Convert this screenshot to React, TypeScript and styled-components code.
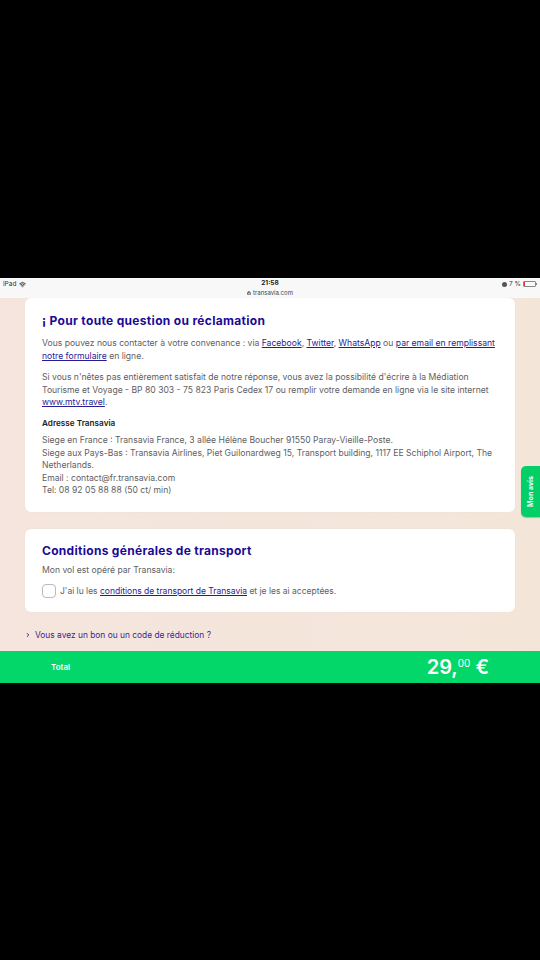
import styled, { createGlobalStyle } from 'styled-components';
import { Wifi, ChevronRight, Lock } from 'lucide-react';

const GlobalStyle = createGlobalStyle`
  html, body {
    margin: 0;
    padding: 0;
    background: #000;
    font-family: "Inter", "Noto Sans", sans-serif;
  }
`;

const Screen = styled.div`
  width: 540px;
  height: 960px;
  background: #000;
  display: flex;
  flex-direction: column;
  overflow: hidden;
  padding-top: 278px;
  box-sizing: border-box;
`;

const StatusBar = styled.header`
  height: 20px;
  flex: none;
  background: #f8f8f9;
  display: grid;
  grid-template-columns: 1fr auto 1fr;
  padding: 0 3px;
  color: #333;
  font-size: 6.5px;
`;

const StatusLeft = styled.div`
  display: flex;
  align-items: center;
  gap: 3px;
  height: 10px;
  margin-top: 1px;
`;

const StatusCenter = styled.div`
  display: flex;
  flex-direction: column;
  align-items: center;
  line-height: 9px;
  padding-top: 1px;
`;

const Clock = styled.span`
  font-weight: 700;
  font-size: 6.5px;
  color: #222;
`;

const Url = styled.span`
  display: flex;
  align-items: center;
  gap: 2px;
  color: #444;
  font-size: 6px;
`;

const StatusRight = styled.div`
  display: flex;
  align-items: center;
  justify-content: flex-end;
  gap: 2px;
  height: 10px;
  margin-top: 1px;
  margin-right: 1px;
`;

const RotationDot = styled.span`
  width: 5px;
  height: 5px;
  border-radius: 50%;
  background: #555;
`;

const Battery = styled.span`
  width: 11px;
  height: 4px;
  border: 1px solid #888;
  border-radius: 1px;
  position: relative;
  &::before {
    content: '';
    position: absolute;
    left: 0;
    top: 0;
    bottom: 0;
    width: 1px;
    background: #d9363e;
  }
  &::after {
    content: '';
    position: absolute;
    right: -2px;
    top: 1px;
    width: 1px;
    height: 2px;
    background: #888;
  }
`;

const Page = styled.main`
  position: relative;
  height: 353px;
  flex: none;
  background: linear-gradient(90deg, #f5e5de 0%, #f3e6d9 100%);
  padding: 0 25px;
  box-sizing: border-box;
`;

const Card = styled.section<{ $pad: string }>`
  background: #fff;
  border-radius: 6px;
  padding: ${(p) => p.$pad};
  margin-bottom: 17px;
  box-shadow: 0 0 2px rgba(120, 100, 90, 0.06);
`;

const Title = styled.h2<{ $spacing: number }>`
  margin: 0;
  color: #1a0a96;
  font-size: 12px;
  line-height: 16px;
  font-weight: 700;
  letter-spacing: ${(p) => p.$spacing}px;
`;

const Body = styled.p`
  margin: 0;
  color: #606062;
  font-size: 8.6px;
  line-height: 12.6px;
`;

const Paragraph = styled(Body)<{ $top: number }>`
  margin-top: ${(p) => p.$top}px;
`;

const Link = styled.a`
  color: #2a1a96;
  text-decoration: underline;
`;

const Subheading = styled.h3`
  margin: 8px 0 4px;
  color: #222;
  font-size: 8.2px;
  line-height: 13px;
  font-weight: 600;
`;

const CheckRow = styled.label`
  display: flex;
  align-items: center;
  gap: 4px;
  margin-top: 7px;
  color: #606062;
  font-size: 8.5px;
`;

const CheckBox = styled.span`
  width: 12px;
  height: 12px;
  flex: none;
  border: 1px solid #b9b9c2;
  border-radius: 4px;
  background: #fff;
`;

const Voucher = styled.div`
  display: flex;
  align-items: center;
  gap: 4px;
  margin-top: 2px;
  color: #3a1f96;
  font-size: 8.4px;
  line-height: 12px;
`;

const ReviewTab = styled.div`
  position: absolute;
  right: 0;
  top: 168px;
  width: 19px;
  height: 51px;
  background: #03cf66;
  border-radius: 5px 0 0 5px;
  box-shadow: 0 1px 1px rgba(0, 90, 40, 0.3);
  display: flex;
  align-items: center;
  justify-content: center;
`;

const ReviewLabel = styled.span`
  transform: rotate(-90deg);
  white-space: nowrap;
  color: #fff;
  font-size: 7px;
  font-weight: 700;
`;

const TotalBar = styled.footer`
  height: 32px;
  flex: none;
  background: #03d76a;
  color: #fff;
  display: flex;
  align-items: center;
  justify-content: space-between;
  padding: 0 51px;
`;

const TotalLabel = styled.span`
  font-size: 8px;
  font-weight: 600;
`;

const Price = styled.span`
  font-size: 20px;
  font-weight: 600;
  line-height: 1;
`;

const Cents = styled.sup`
  font-size: 10px;
  font-weight: 400;
  vertical-align: 7px;
  line-height: 0;
`;

export default function App() {
  return (
    <Screen>
      <GlobalStyle />
      <StatusBar>
        <StatusLeft>
          iPad
          <Wifi size={7} strokeWidth={3} />
        </StatusLeft>
        <StatusCenter>
          <Clock>21:58</Clock>
          <Url>
            <Lock size={4} strokeWidth={4} />
            transavia.com
          </Url>
        </StatusCenter>
        <StatusRight>
          <RotationDot />
          7 %
          <Battery />
        </StatusRight>
      </StatusBar>
      <Page>
        <Card $pad="15px 17px 15px">
          <Title $spacing={0.32}>¡ Pour toute question ou réclamation</Title>
          <Paragraph $top={8}>
            Vous pouvez nous contacter à votre convenance : via <Link>Facebook</Link>, <Link>Twitter</Link>,{' '}
            <Link>WhatsApp</Link> ou <Link>par email en remplissant notre formulaire</Link> en ligne.
          </Paragraph>
          <Paragraph $top={9}>
            Si vous n'nêtes pas entièrement satisfait de notre réponse, vous avez la possibilité d'écrire à la Médiation
            <br />
            Tourisme et Voyage - BP 80 303 - 75 823 Paris Cedex 17 ou remplir votre demande en ligne via le site internet{' '}
            <Link>www.mtv.travel</Link>.
          </Paragraph>
          <Subheading>Adresse Transavia</Subheading>
          <Body>
            Siege en France : Transavia France, 3 allée Hélène Boucher 91550 Paray-Vieille-Poste.
            <br />
            Siege aux Pays-Bas : Transavia Airlines, Piet Guilonardweg 15, Transport building, 1117 EE Schiphol Airport, The
            Netherlands.
            <br />
            Email : contact@fr.transavia.com
            <br />
            Tel: 08 92 05 88 88 (50 ct/ min)
          </Body>
        </Card>
        <Card $pad="14px 17px 14px">
          <Title $spacing={0.3}>Conditions générales de transport</Title>
          <Paragraph $top={5}>Mon vol est opéré par Transavia:</Paragraph>
          <CheckRow>
            <CheckBox />
            <span>
              J'ai lu les <Link>conditions de transport de Transavia</Link> et je les ai acceptées.
            </span>
          </CheckRow>
        </Card>
        <Voucher>
          <ChevronRight size={6} strokeWidth={4} />
          Vous avez un bon ou un code de réduction ?
        </Voucher>
        <ReviewTab>
          <ReviewLabel>Mon avis</ReviewLabel>
        </ReviewTab>
      </Page>
      <TotalBar>
        <TotalLabel>Total</TotalLabel>
        <Price>
          29,<Cents>00</Cents> €
        </Price>
      </TotalBar>
    </Screen>
  );
}
